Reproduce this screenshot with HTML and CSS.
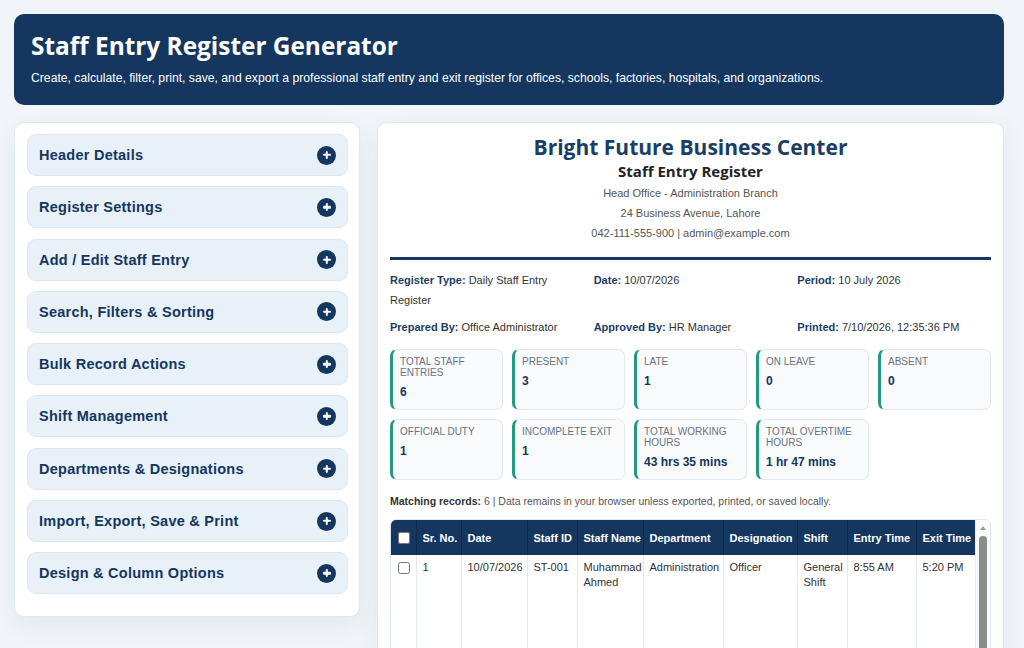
FILE: index.html
```html
<!DOCTYPE html>
<html lang="en">
<head>
<meta charset="utf-8">
<title>Staff Entry Register Generator</title>
<link rel="stylesheet" href="styles.css">
</head>
<body>
<div class="app">
  <header class="hero">
    <h1>Staff Entry Register Generator</h1>
    <p>Create, calculate, filter, print, save, and export a professional staff entry and exit register for offices, schools, factories, hospitals, and organizations.</p>
  </header>

  <div class="layout">
    <aside class="sidebar">
      <div class="acc"><span>Header Details</span><i class="plus"></i></div>
      <div class="acc"><span>Register Settings</span><i class="plus"></i></div>
      <div class="acc"><span>Add / Edit Staff Entry</span><i class="plus"></i></div>
      <div class="acc"><span>Search, Filters &amp; Sorting</span><i class="plus"></i></div>
      <div class="acc"><span>Bulk Record Actions</span><i class="plus"></i></div>
      <div class="acc"><span>Shift Management</span><i class="plus"></i></div>
      <div class="acc"><span>Departments &amp; Designations</span><i class="plus"></i></div>
      <div class="acc"><span>Import, Export, Save &amp; Print</span><i class="plus"></i></div>
      <div class="acc"><span>Design &amp; Column Options</span><i class="plus"></i></div>
    </aside>

    <main class="sheet">
      <div class="org">
        <h2>Bright Future Business Center</h2>
        <h3>Staff Entry Register</h3>
        <p>Head Office - Administration Branch</p>
        <p>24 Business Avenue, Lahore</p>
        <p>042-111-555-900 | admin@example.com</p>
      </div>

      <div class="meta">
        <div><b>Register Type:</b> Daily Staff Entry Register</div>
        <div><b>Date:</b> 10/07/2026</div>
        <div><b>Period:</b> 10 July 2026</div>
        <div><b>Prepared By:</b> Office Administrator</div>
        <div><b>Approved By:</b> HR Manager</div>
        <div><b>Printed:</b> 7/10/2026, 12:35:36 PM</div>
      </div>

      <div class="stats">
        <div class="stat"><span>Total Staff Entries</span><strong>6</strong></div>
        <div class="stat"><span>Present</span><strong>3</strong></div>
        <div class="stat"><span>Late</span><strong>1</strong></div>
        <div class="stat"><span>On Leave</span><strong>0</strong></div>
        <div class="stat"><span>Absent</span><strong>0</strong></div>
        <div class="stat"><span>Official Duty</span><strong>1</strong></div>
        <div class="stat"><span>Incomplete Exit</span><strong>1</strong></div>
        <div class="stat"><span>Total Working Hours</span><strong>43 hrs 35 mins</strong></div>
        <div class="stat"><span>Total Overtime Hours</span><strong>1 hr 47 mins</strong></div>
      </div>

      <p class="note"><b>Matching records:</b> 6 | Data remains in your browser unless exported, printed, or saved locally.</p>

      <div class="table-frame">
        <div class="table-view">
          <table class="register">
            <colgroup>
              <col class="c-chk"><col class="c-sr"><col class="c-date"><col class="c-id"><col class="c-name"><col class="c-dept"><col class="c-desg"><col class="c-shift"><col class="c-in"><col class="c-out"><col class="c-hrs"><col class="c-ot"><col class="c-status"><col class="c-rem"><col class="c-act">
            </colgroup>
            <thead>
              <tr>
                <th><input type="checkbox" class="chk"></th>
                <th>Sr. No.</th><th>Date</th><th>Staff ID</th><th>Staff Name</th><th>Department</th><th>Designation</th><th>Shift</th><th>Entry Time</th><th>Exit Time</th><th>Working Hours</th><th>Overtime</th><th>Status</th><th>Remarks</th><th>Actions</th>
              </tr>
            </thead>
            <tbody>
              <tr>
                <td><input type="checkbox" class="chk"></td>
                <td>1</td><td>10/07/2026</td><td>ST-001</td><td>Muhammad Ahmed</td><td>Administration</td><td>Officer</td><td>General Shift</td><td>8:55 AM</td><td>5:20 PM</td><td>8 hrs 25 mins</td><td>25 mins</td><td>Present</td><td>On time</td>
                <td class="actions"><button>Edit</button><button>Duplicate</button><button>Mark Exit</button><button>Delete</button></td>
              </tr>
              <tr>
                <td><input type="checkbox" class="chk"></td>
                <td>2</td><td>10/07/2026</td><td>ST-002</td><td>Ayesha Khan</td><td>Accounts</td><td>Accountant</td><td>General Shift</td><td>9:20 AM</td><td>6:05 PM</td><td>8 hrs 45 mins</td><td>45 mins</td><td>Late</td><td>Traffic delay</td>
                <td class="actions"><button>Edit</button><button>Duplicate</button><button>Mark Exit</button><button>Delete</button></td>
              </tr>
              <tr>
                <td><input type="checkbox" class="chk"></td>
                <td>3</td><td>10/07/2026</td><td>ST-003</td><td>Bilal Hussain</td><td>IT</td><td>Support Engineer</td><td>General Shift</td><td>8:50 AM</td><td>5:10 PM</td><td>8 hrs 20 mins</td><td>20 mins</td><td>Present</td><td>-</td>
                <td class="actions"><button>Edit</button><button>Duplicate</button><button>Mark Exit</button><button>Delete</button></td>
              </tr>
              <tr>
                <td><input type="checkbox" class="chk"></td>
                <td>4</td><td>10/07/2026</td><td>ST-004</td><td>Sana Malik</td><td>Human Resources</td><td>HR Officer</td><td>Morning Shift</td><td>7:58 AM</td><td>4:30 PM</td><td>8 hrs 32 mins</td><td>17 mins</td><td>Present</td><td>-</td>
                <td class="actions"><button>Edit</button><button>Duplicate</button><button>Mark Exit</button><button>Delete</button></td>
              </tr>
              <tr>
                <td><input type="checkbox" class="chk"></td>
                <td>5</td><td>10/07/2026</td><td>ST-005</td><td>Usman Tariq</td><td>Sales</td><td>Sales Executive</td><td>General Shift</td><td>9:00 AM</td><td>6:38 PM</td><td>9 hrs 38 mins</td><td>0 mins</td><td>Official Duty</td><td>Client visit</td>
                <td class="actions"><button>Edit</button><button>Duplicate</button><button>Mark Exit</button><button>Delete</button></td>
              </tr>
              <tr>
                <td><input type="checkbox" class="chk"></td>
                <td>6</td><td>10/07/2026</td><td>ST-006</td><td>Hina Raza</td><td>Security</td><td>Guard</td><td>Evening Shift</td><td>2:00 PM</td><td>-</td><td>-</td><td>-</td><td>Incomplete Exit</td><td>Exit not marked</td>
                <td class="actions"><button>Edit</button><button>Duplicate</button><button>Mark Exit</button><button>Delete</button></td>
              </tr>
            </tbody>
          </table>
        </div>
        <div class="vscroll" aria-hidden="true">
          <span class="vscroll-up"></span>
          <span class="vscroll-thumb"></span>
        </div>
      </div>
    </main>
  </div>
</div>
</body>
</html>
```
FILE: styles.css
```css
* { box-sizing: border-box; }

html, body { margin: 0; }

body {
  background: #f1f5f9;
  font-family: "Liberation Sans", Arial, sans-serif;
  color: #1f2937;
  padding: 14px;
}

.app { width: 990px; }

/* top banner */
.hero {
  background: #14365f;
  color: #fff;
  border-radius: 10px;
  padding: 17px 17px 20px;
  height: 91px;
  margin-bottom: 17px;
}
.hero h1 {
  margin: 0;
  font-family: "Open Sans", sans-serif;
  font-weight: 700;
  font-size: 24.4px;
  line-height: 30px;
}
.hero p {
  margin: 9px 0 0;
  font-size: 12.2px;
  line-height: 16px;
}

.layout {
  display: grid;
  grid-template-columns: 346px 627px;
  gap: 17px;
  align-items: start;
}

/* accordion column */
.sidebar {
  background: #fff;
  border: 1px solid #e2e8f0;
  border-radius: 10px;
  padding: 11px 11px 11px 12px;
  box-shadow: 0 8px 24px rgba(20, 54, 95, 0.07);
}
.acc {
  display: flex;
  align-items: center;
  justify-content: space-between;
  height: 42px;
  padding: 0 11px 0 11px;
  background: #e8f0f8;
  border: 1px solid #dde7f2;
  border-radius: 9px;
  margin-bottom: 10.3px;
  color: #14365f;
  font-weight: 700;
  font-size: 14.5px;
  letter-spacing: 0.25px;
}
.plus {
  position: relative;
  width: 19px;
  height: 19px;
  border-radius: 50%;
  background: #14365f;
  flex: none;
}
.plus::before, .plus::after {
  content: "";
  position: absolute;
  left: 50%;
  top: 50%;
  background: #fff;
  border-radius: 1px;
  transform: translate(-50%, -50%);
}
.plus::before { width: 8px; height: 2.4px; }
.plus::after { width: 2.4px; height: 8px; }

/* register sheet */
.sheet {
  background: #fff;
  border: 1px solid #e2e8f0;
  border-radius: 10px;
  padding: 11px 12px 12px;
  box-shadow: 0 8px 24px rgba(20, 54, 95, 0.07);
  min-width: 0;
  overflow: hidden;
}
.org {
  text-align: center;
  border-bottom: 3px solid #14365f;
  padding-bottom: 14px;
}
.org h2 {
  margin: 0;
  font-family: "Open Sans", sans-serif;
  font-size: 21px;
  line-height: 26px;
  color: #1a3d66;
}
.org h3 {
  margin: 0;
  font-family: "Open Sans", sans-serif;
  font-size: 15px;
  line-height: 23px;
  color: #222;
}
.org p {
  margin: 0;
  font-size: 11px;
  line-height: 20px;
  color: #555;
}

.meta {
  display: grid;
  grid-template-columns: repeat(3, 1fr);
  column-gap: 10px;
  row-gap: 7px;
  margin-top: 10px;
  font-size: 11px;
  line-height: 20px;
  color: #333;
}
.meta b { color: #1a3d66; }

.stats {
  display: grid;
  grid-template-columns: repeat(5, 1fr);
  gap: 9px;
  margin-top: 12px;
}
.stat {
  height: 61px;
  background: #f8fafc;
  border: 1px solid #e2e8f0;
  border-left: 3px solid #23997f;
  border-radius: 7px;
  padding: 6px 7px 0 7px;
  display: flex;
  flex-direction: column;
}
.stat span {
  font-size: 10px;
  line-height: 11px;
  text-transform: uppercase;
  color: #6b7280;
  margin-bottom: 6px;
}
.stat strong {
  font-size: 12px;
  line-height: 16px;
  color: #14365f;
}

.note {
  margin: 13px 0 10px;
  font-size: 10.5px;
  line-height: 16px;
  color: #555;
}
.note b { color: #333; }

/* staff table with its scroll track */
.table-frame {
  display: flex;
  height: 420px;
  border: 1px solid #e2e8f0;
  border-radius: 6px;
  overflow: hidden;
}
.table-view {
  flex: 1;
  min-width: 0;
  overflow: hidden;
}
.vscroll {
  flex: none;
  width: 15px;
  background: #fbfbfb;
  border-left: 1px solid #ececec;
  display: flex;
  flex-direction: column;
  align-items: center;
  padding-top: 6px;
}
.vscroll-up {
  width: 0;
  height: 0;
  border-left: 3.5px solid transparent;
  border-right: 3.5px solid transparent;
  border-bottom: 4px solid #9a9a9a;
}
.vscroll-thumb {
  margin-top: 6px;
  width: 8px;
  height: 330px;
  border-radius: 4px;
  background: #8c8c8c;
}

.register {
  border-collapse: collapse;
  table-layout: fixed;
  width: 1175px;
  font-size: 11px;
}
.c-chk { width: 25px; }
.c-sr { width: 45px; }
.c-date { width: 66px; }
.c-id { width: 50px; }
.c-name { width: 66px; }
.c-dept { width: 80px; }
.c-desg { width: 74px; }
.c-shift { width: 50px; }
.c-in { width: 69px; }
.c-out { width: 59px; }
.c-hrs { width: 100px; }
.c-ot { width: 80px; }
.c-status { width: 80px; }
.c-rem { width: 120px; }
.c-act { width: 211px; }

.register th {
  background: #14365f;
  color: #fff;
  text-align: left;
  font-weight: 700;
  height: 35px;
  padding: 0 6px;
  border-right: 1px solid #0e2a4b;
  white-space: nowrap;
  overflow: hidden;
}
.register td {
  vertical-align: top;
  padding: 5px 6px 7px;
  line-height: 15px;
  color: #333;
  border-right: 1px solid #e2e8f0;
  border-bottom: 1px solid #e2e8f0;
}
.register th:first-child { padding: 0 0 0 7px; }
.register td:first-child { padding: 5px 0 0 7px; }

.chk {
  margin: 0;
  width: 12px;
  height: 12px;
  vertical-align: middle;
}

.actions button {
  display: block;
  width: 100%;
  margin-bottom: 6px;
  padding: 6px 8px;
  border: 0;
  border-radius: 5px;
  background: #14365f;
  color: #fff;
  font: 700 11px "Liberation Sans", Arial, sans-serif;
  height: 30px;
}
```
